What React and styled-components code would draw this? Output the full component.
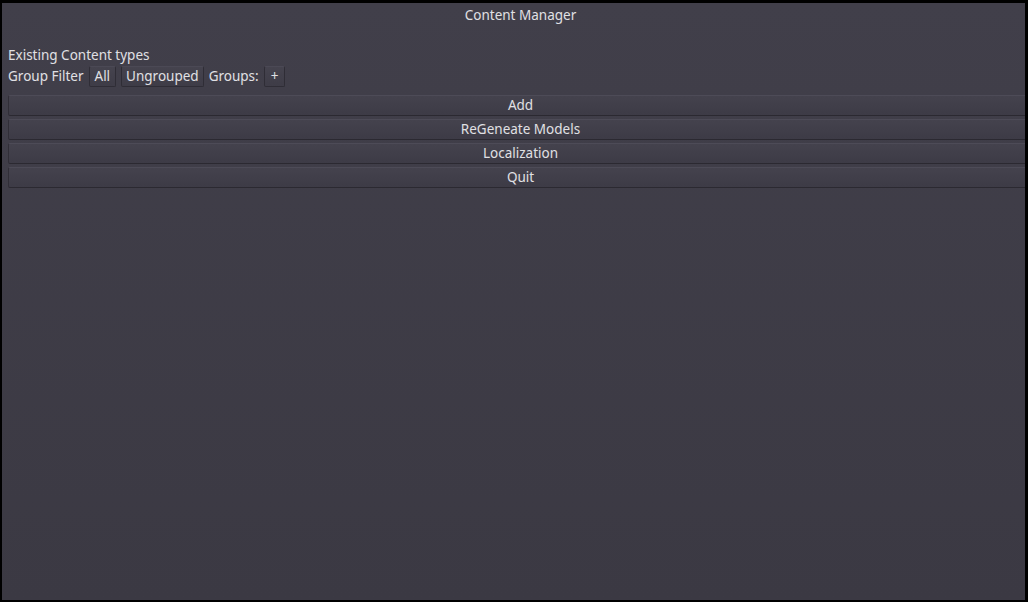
import styled, { createGlobalStyle } from "styled-components";

const GlobalStyle = createGlobalStyle`
  html, body {
    margin: 0;
    padding: 0;
    background: #000000;
    overflow: hidden;
  }
`;

const Screen = styled.div`
  width: 1025px;
  height: 600px;
  padding: 3px 0 0 2px;
  box-sizing: border-box;
  overflow: hidden;
  background: #000000;
`;

const Window = styled.div`
  width: 1036px;
  height: 597px;
  padding: 0 5px 0 6px;
  box-sizing: border-box;
  background: linear-gradient(180deg, #413f4a 0%, #3b3943 100%);
  font-family: "Noto Sans", "DejaVu Sans", sans-serif;
  font-size: 13.5px;
  color: #e0e0e4;
`;

const Title = styled.div`
  height: 24px;
  display: flex;
  align-items: center;
  justify-content: center;
`;

const Section = styled.div`
  margin-top: 19px;
  line-height: 19px;
`;

const FilterRow = styled.div`
  display: flex;
  align-items: center;
  height: 22px;
`;

const Label = styled.span`
  line-height: 20px;
  margin-right: ${(p) => p.$gap || 5}px;
`;

const Chip = styled.button`
  font: inherit;
  color: inherit;
  height: 21px;
  padding: 0 ${(p) => p.$pad || 5}px;
  margin-right: 5px;
  display: flex;
  align-items: center;
  background: linear-gradient(180deg, #45434e 0%, #3e3c47 100%);
  border: 1px solid #2f2d36;
  border-top-color: #4b4955;
  border-radius: 2px;
`;

const Actions = styled.div`
  display: flex;
  flex-direction: column;
  gap: 3px;
  margin-top: 8px;
`;

const Action = styled.button`
  font: inherit;
  color: inherit;
  height: 21px;
  padding: 0 0 2px;
  display: flex;
  align-items: center;
  justify-content: center;
  background: linear-gradient(180deg, #44424d 0%, #3d3b46 100%);
  border: 1px solid #302e37;
  border-top-color: #4d4b57;
  border-bottom-color: #2b2931;
  border-radius: 2px;
`;

export default function App() {
  return (
    <>
      <GlobalStyle />
      <Screen>
        <Window>
          <Title>Content Manager</Title>
          <Section>Existing Content types</Section>
          <FilterRow>
            <Label>Group Filter</Label>
            <Chip>All</Chip>
            <Chip $pad={4}>Ungrouped</Chip>
            <Label $gap={5}>Groups:</Label>
            <Chip $pad={6}>+</Chip>
          </FilterRow>
          <Actions>
            <Action>Add</Action>
            <Action>ReGeneate Models</Action>
            <Action>Localization</Action>
            <Action>Quit</Action>
          </Actions>
        </Window>
      </Screen>
    </>
  );
}
